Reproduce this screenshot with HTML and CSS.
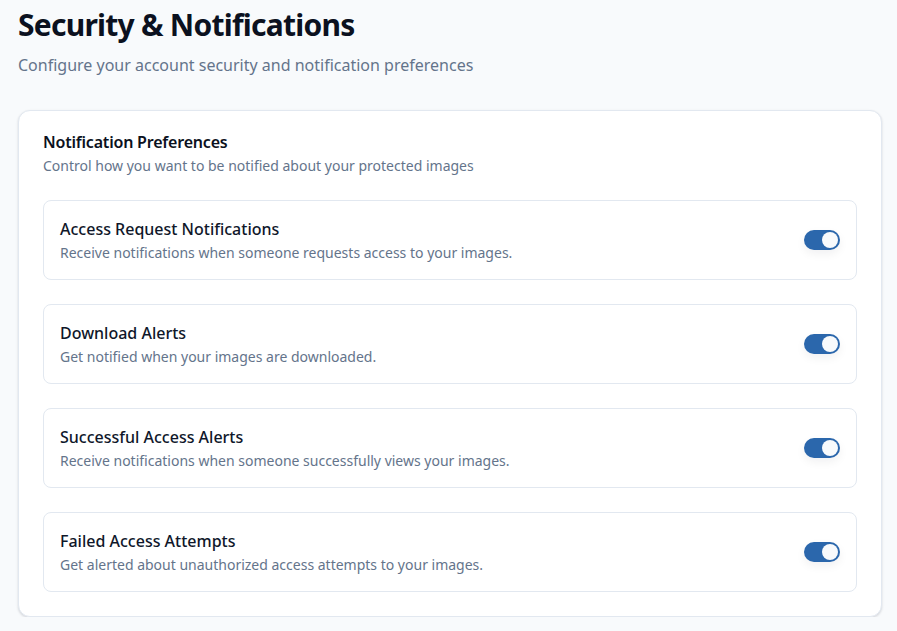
FILE: index.html
```html
<!DOCTYPE html>
<html lang="en">
<head>
<meta charset="utf-8">
<title>Security &amp; Notifications</title>
<link rel="stylesheet" href="styles.css">
</head>
<body>
<main class="page">
  <header class="page-header">
    <h1 class="page-title">Security &amp; Notifications</h1>
    <p class="page-subtitle">Configure your account security and notification preferences</p>
  </header>

  <section class="card">
    <h2 class="card-title">Notification Preferences</h2>
    <p class="card-desc">Control how you want to be notified about your protected images</p>

    <div class="pref-list">
      <div class="pref">
        <div class="pref-text">
          <div class="pref-title">Access Request Notifications</div>
          <div class="pref-desc">Receive notifications when someone requests access to your images.</div>
        </div>
        <span class="toggle is-on" role="switch" aria-checked="true"><span class="knob"></span></span>
      </div>
      <div class="pref">
        <div class="pref-text">
          <div class="pref-title">Download Alerts</div>
          <div class="pref-desc">Get notified when your images are downloaded.</div>
        </div>
        <span class="toggle is-on" role="switch" aria-checked="true"><span class="knob"></span></span>
      </div>
      <div class="pref">
        <div class="pref-text">
          <div class="pref-title">Successful Access Alerts</div>
          <div class="pref-desc">Receive notifications when someone successfully views your images.</div>
        </div>
        <span class="toggle is-on" role="switch" aria-checked="true"><span class="knob"></span></span>
      </div>
      <div class="pref">
        <div class="pref-text">
          <div class="pref-title">Failed Access Attempts</div>
          <div class="pref-desc">Get alerted about unauthorized access attempts to your images.</div>
        </div>
        <span class="toggle is-on" role="switch" aria-checked="true"><span class="knob"></span></span>
      </div>
    </div>
  </section>
</main>
</body>
</html>
```

FILE: styles.css
```css
* { box-sizing: border-box; }

html, body {
  margin: 0;
  padding: 0;
  background: #f8fafc;
}

body {
  font-family: "Noto Sans", "Open Sans", sans-serif;
  color: #0f172a;
}

.page {
  padding: 7px 15px 0 18px;
}

.page-title {
  margin: 0;
  font-size: 30px;
  line-height: 36px;
  font-weight: 700;
  color: #0b1120;
  letter-spacing: -0.75px;
}

.page-subtitle {
  margin: 10px 0 0;
  font-size: 16px;
  line-height: 24px;
  color: #64748b;
}

.card {
  margin-top: 33px;
  background: #ffffff;
  border: 1px solid #e2e8f0;
  border-radius: 12px;
  padding: 19px 24px 24px;
  box-shadow: 0 1px 3px rgba(15, 23, 42, 0.10), 0 1px 2px rgba(15, 23, 42, 0.06);
}

.card-title {
  margin: 0;
  font-size: 16px;
  line-height: 24px;
  font-weight: 600;
  color: #0b1120;
  letter-spacing: -0.2px;
}

.card-desc {
  margin: 2px 0 0;
  font-size: 14px;
  line-height: 20px;
  color: #64748b;
}

.pref-list {
  margin-top: 24px;
  display: flex;
  flex-direction: column;
  gap: 24px;
}

.pref {
  display: flex;
  align-items: center;
  justify-content: space-between;
  gap: 16px;
  padding: 16px;
  border: 1px solid #e2e8f0;
  border-radius: 8px;
  background: #ffffff;
}

.pref-title {
  font-size: 16px;
  line-height: 24px;
  font-weight: 500;
  color: #0f172a;
}

.pref-desc {
  margin-top: 2px;
  font-size: 14px;
  line-height: 20px;
  color: #64748b;
}

.toggle {
  flex: none;
  display: flex;
  align-items: center;
  width: 36px;
  height: 20px;
  padding: 2px;
  border-radius: 999px;
  background: #cbd5e1;
  box-shadow: 0 4px 10px rgba(15, 23, 42, 0.06);
}

.toggle.is-on {
  background: #2b67ac;
  justify-content: flex-end;
}

.knob {
  width: 16px;
  height: 16px;
  border-radius: 50%;
  background: #f8fafc;
}
```
